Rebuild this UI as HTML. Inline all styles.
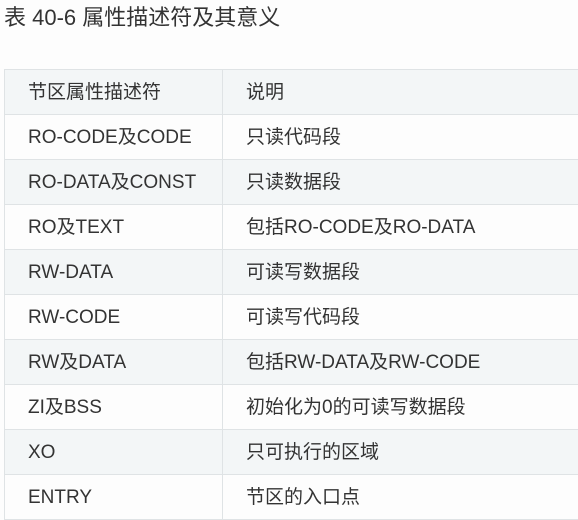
<!DOCTYPE html>
<html><head><meta charset="utf-8"><style>
body{margin:0;background:#fdfdfd;width:578px;height:515px;overflow:hidden;font-family:"Liberation Sans","Noto Sans CJK SC",sans-serif;color:#333;}
.t{position:absolute;left:4px;top:4px;font-size:22px;line-height:28px;color:#333}
table{position:absolute;left:4px;top:69px;border-collapse:collapse;width:600px;font-size:19px;table-layout:fixed}
td{border:1px solid #dfe3e5;height:45px;line-height:43px;padding:0 0 0 23px;box-sizing:border-box;white-space:nowrap;overflow:hidden}
td:first-child{width:218px}
tr:nth-child(odd) td{background:#f3f6f7}
tr:nth-child(even) td{background:#fdfdfd}
</style></head><body>
<div class="t">表 40-6 属性描述符及其意义</div>
<table>
<tr><td>节区属性描述符</td><td>说明</td></tr>
<tr><td>RO-CODE及CODE</td><td>只读代码段</td></tr>
<tr><td>RO-DATA及CONST</td><td>只读数据段</td></tr>
<tr><td>RO及TEXT</td><td>包括RO-CODE及RO-DATA</td></tr>
<tr><td>RW-DATA</td><td>可读写数据段</td></tr>
<tr><td>RW-CODE</td><td>可读写代码段</td></tr>
<tr><td>RW及DATA</td><td>包括RW-DATA及RW-CODE</td></tr>
<tr><td>ZI及BSS</td><td>初始化为0的可读写数据段</td></tr>
<tr><td>XO</td><td>只可执行的区域</td></tr>
<tr><td>ENTRY</td><td>节区的入口点</td></tr>
</table>
</body></html>
